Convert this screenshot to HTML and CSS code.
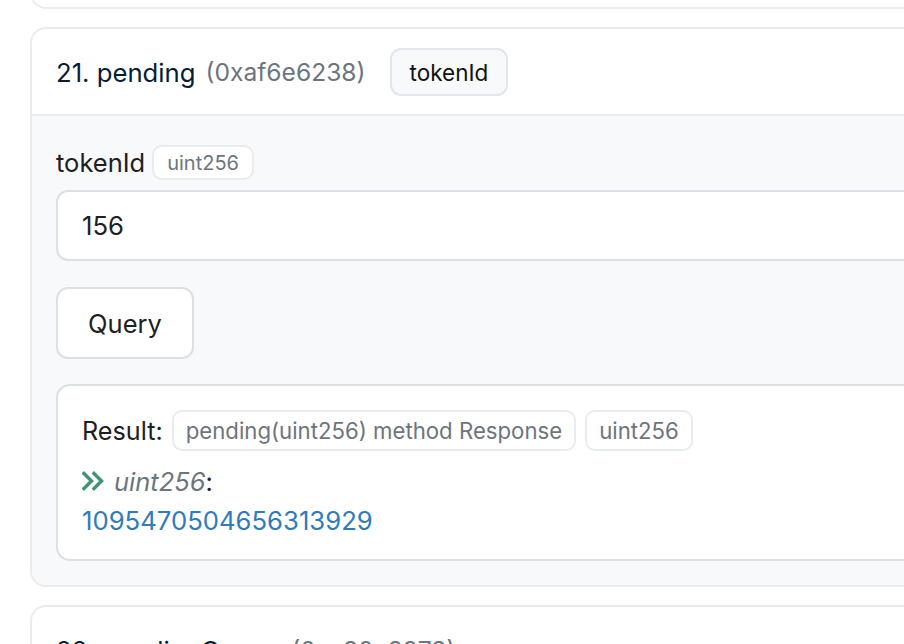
FILE: index.html
```html
<!DOCTYPE html>
<html lang="en">
<head>
<meta charset="utf-8">
<title>Read Contract</title>
<link rel="stylesheet" href="styles.css">
</head>
<body>
<div class="list">
  <section class="card card-prev">
    <div class="card-head"></div>
  </section>

  <section class="card">
    <div class="card-head">
      <span class="fn-name">21. pending</span>
      <span class="fn-sel">(0xaf6e6238)</span>
      <span class="chip">tokenId</span>
    </div>
    <div class="card-body">
      <div class="field-label">
        <span>tokenId</span>
        <span class="type-chip">uint256</span>
      </div>
      <div class="input">156</div>
      <div><button class="btn">Query</button></div>
      <div class="result">
        <div class="result-row">
          <span class="result-label">Result:</span>
          <span class="type-chip lg">pending(uint256) method Response</span>
          <span class="type-chip lg">uint256</span>
        </div>
        <div class="out-name">
          <svg class="chev" width="24" height="20" viewBox="0 0 24 20" aria-hidden="true">
            <path d="M2 2.5 L9.5 10 L2 17.5 M12 2.5 L19.5 10 L12 17.5" fill="none" stroke="#3f9471" stroke-width="3.4" stroke-linecap="square" stroke-linejoin="miter"/>
          </svg>
          <span><em>uint256</em>:</span>
        </div>
        <div class="out-val">1095470504656313929</div>
      </div>
    </div>
  </section>

  <section class="card">
    <div class="card-head">
      <span class="fn-name">22. pendingOwner</span>
      <span class="fn-sel">(0xe30c3978)</span>
    </div>
  </section>
</div>
</body>
</html>
```
FILE: styles.css
```css
html, body {
  margin: 0;
  padding: 0;
  background: #ffffff;
  overflow: hidden;
}
body {
  width: 904px;
  height: 644px;
  font-family: Inter, "Noto Sans", "Liberation Sans", sans-serif;
  color: #081d35;
}
.list {
  display: flex;
  flex-direction: column;
  gap: 18px;
  padding-left: 30px;
  margin-top: -40px;
}
.card {
  width: 960px;
  border: 2px solid #e9ecef;
  border-radius: 16px;
  background: #fff;
  overflow: hidden;
  flex: none;
}
.card-prev {
  height: 45px;
}
.card-head {
  display: flex;
  align-items: center;
  gap: 10px;
  padding: 19px 24px 18px;
  min-height: 48px;
  font-size: 25.7px;
}
.fn-name { color: #081d35; }
.fn-sel { color: #6c757d; font-size: 24.6px; }
.chip {
  margin-left: 14px;
  display: inline-flex;
  align-items: center;
  height: 44px;
  padding: 0 18px;
  border: 2px solid #e3e6ea;
  border-radius: 11px;
  background: #f8f9fa;
  font-size: 22.5px;
  color: #111;
}
.card-body {
  background: #f8f9fa;
  border-top: 2px solid #e9ecef;
  padding: 29px 24px 24px;
  display: flex;
  flex-direction: column;
}
.field-label {
  display: flex;
  align-items: center;
  gap: 7px;
  font-size: 25.5px;
  color: #1e2022;
  height: 35px;
}
.type-chip {
  display: inline-flex;
  align-items: center;
  height: 31px;
  padding: 0 13px;
  border: 2px solid #e9ecef;
  border-radius: 10px;
  background: #fff;
  font-size: 20px;
  color: #6c757d;
}
.type-chip.lg {
  height: 37px;
  font-size: 22.2px;
  padding: 0 12px;
}
.input {
  margin-top: 10px;
  height: 67px;
  border: 2px solid #dcdfe3;
  border-radius: 12px;
  background: #fff;
  display: flex;
  align-items: center;
  padding: 0 24px;
  font-size: 25.7px;
  color: #1e2022;
}
.btn {
  margin-top: 26px;
  width: 138px;
  height: 72px;
  border: 2px solid #dcdfe3;
  border-radius: 12px;
  background: #fff;
  font-family: inherit;
  font-size: 25.5px;
  color: #1e2022;
  padding: 0;
}
.result {
  margin-top: 25px;
  height: 177px;
  box-sizing: border-box;
  border: 2px solid #dcdfe3;
  border-radius: 14px;
  background: #fff;
  padding: 24px 24px;
}
.result-row {
  display: flex;
  align-items: center;
  gap: 9px;
  font-size: 25.2px;
  color: #1e2022;
}
.out-name {
  margin-top: 12px;
  display: flex;
  align-items: center;
  gap: 8px;
  font-size: 25.5px;
  color: #1e2022;
  height: 36px;
}
.out-name em {
  color: #6c757d;
}
.chev { flex: none; }
.out-val {
  margin-top: 4px;
  font-size: 25.7px;
  color: #2f7bbd;
  line-height: 36px;
}
```
